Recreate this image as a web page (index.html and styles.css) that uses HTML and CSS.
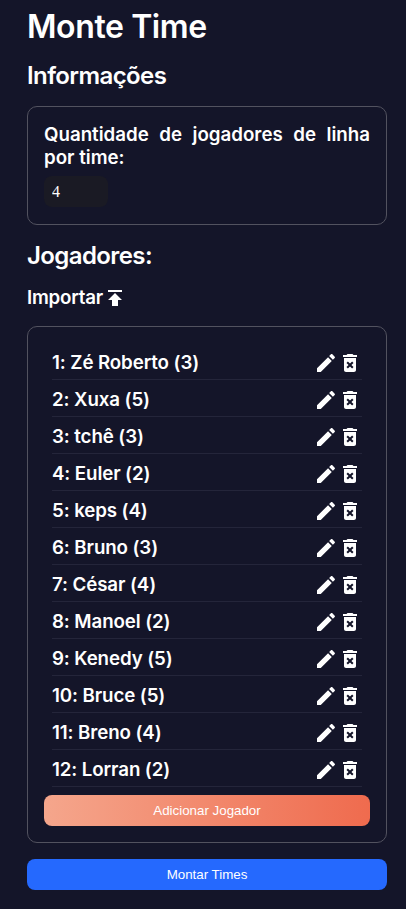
FILE: index.html
```html
<!DOCTYPE html>
<html lang="pt-BR">
<head>
<meta charset="utf-8">
<title>Monte Time</title>
<link rel="stylesheet" href="styles.css">
</head>
<body>
<main class="page">
  <h1 class="title">Monte Time</h1>
  <h2 class="heading">Informações</h2>
  <section class="card info">
    <label class="label" for="qty">Quantidade de jogadores de linha por time:</label>
    <input class="qty" id="qty" type="text" value="4">
  </section>
  <h2 class="heading players">Jogadores:</h2>
  <div class="import">Importar<svg class="import-icon" viewBox="0 0 24 24"><path d="M5 4v2h14V4H5zm0 10h4v6h6v-6h4l-7-7-7 7z"/></svg></div>
  <section class="card list-card">
    <ul class="list">
      <li class="row"><span>1: Zé Roberto (3)</span><span class="icons"><svg viewBox="0 0 24 24"><path d="M3 17.25V21h3.75L17.81 9.94l-3.75-3.75L3 17.25zM20.71 7.04c.39-.39.39-1.02 0-1.41l-2.34-2.34c-.39-.39-1.02-.39-1.41 0l-1.83 1.83 3.75 3.75 1.83-1.83z"/></svg><svg viewBox="0 0 24 24"><path d="M6 19c0 1.1.9 2 2 2h8c1.1 0 2-.9 2-2V7H6v12zm2.46-7.12 1.41-1.41L12 12.59l2.12-2.12 1.41 1.41L13.41 14l2.12 2.12-1.41 1.41L12 15.41l-2.12 2.12-1.41-1.41L10.59 14l-2.13-2.12zM15.5 4l-1-1h-5l-1 1H5v2h14V4z"/></svg></span></li>
      <li class="row"><span>2: Xuxa (5)</span><span class="icons"><svg viewBox="0 0 24 24"><path d="M3 17.25V21h3.75L17.81 9.94l-3.75-3.75L3 17.25zM20.71 7.04c.39-.39.39-1.02 0-1.41l-2.34-2.34c-.39-.39-1.02-.39-1.41 0l-1.83 1.83 3.75 3.75 1.83-1.83z"/></svg><svg viewBox="0 0 24 24"><path d="M6 19c0 1.1.9 2 2 2h8c1.1 0 2-.9 2-2V7H6v12zm2.46-7.12 1.41-1.41L12 12.59l2.12-2.12 1.41 1.41L13.41 14l2.12 2.12-1.41 1.41L12 15.41l-2.12 2.12-1.41-1.41L10.59 14l-2.13-2.12zM15.5 4l-1-1h-5l-1 1H5v2h14V4z"/></svg></span></li>
      <li class="row"><span>3: tchê (3)</span><span class="icons"><svg viewBox="0 0 24 24"><path d="M3 17.25V21h3.75L17.81 9.94l-3.75-3.75L3 17.25zM20.71 7.04c.39-.39.39-1.02 0-1.41l-2.34-2.34c-.39-.39-1.02-.39-1.41 0l-1.83 1.83 3.75 3.75 1.83-1.83z"/></svg><svg viewBox="0 0 24 24"><path d="M6 19c0 1.1.9 2 2 2h8c1.1 0 2-.9 2-2V7H6v12zm2.46-7.12 1.41-1.41L12 12.59l2.12-2.12 1.41 1.41L13.41 14l2.12 2.12-1.41 1.41L12 15.41l-2.12 2.12-1.41-1.41L10.59 14l-2.13-2.12zM15.5 4l-1-1h-5l-1 1H5v2h14V4z"/></svg></span></li>
      <li class="row"><span>4: Euler (2)</span><span class="icons"><svg viewBox="0 0 24 24"><path d="M3 17.25V21h3.75L17.81 9.94l-3.75-3.75L3 17.25zM20.71 7.04c.39-.39.39-1.02 0-1.41l-2.34-2.34c-.39-.39-1.02-.39-1.41 0l-1.83 1.83 3.75 3.75 1.83-1.83z"/></svg><svg viewBox="0 0 24 24"><path d="M6 19c0 1.1.9 2 2 2h8c1.1 0 2-.9 2-2V7H6v12zm2.46-7.12 1.41-1.41L12 12.59l2.12-2.12 1.41 1.41L13.41 14l2.12 2.12-1.41 1.41L12 15.41l-2.12 2.12-1.41-1.41L10.59 14l-2.13-2.12zM15.5 4l-1-1h-5l-1 1H5v2h14V4z"/></svg></span></li>
      <li class="row"><span>5: keps (4)</span><span class="icons"><svg viewBox="0 0 24 24"><path d="M3 17.25V21h3.75L17.81 9.94l-3.75-3.75L3 17.25zM20.71 7.04c.39-.39.39-1.02 0-1.41l-2.34-2.34c-.39-.39-1.02-.39-1.41 0l-1.83 1.83 3.75 3.75 1.83-1.83z"/></svg><svg viewBox="0 0 24 24"><path d="M6 19c0 1.1.9 2 2 2h8c1.1 0 2-.9 2-2V7H6v12zm2.46-7.12 1.41-1.41L12 12.59l2.12-2.12 1.41 1.41L13.41 14l2.12 2.12-1.41 1.41L12 15.41l-2.12 2.12-1.41-1.41L10.59 14l-2.13-2.12zM15.5 4l-1-1h-5l-1 1H5v2h14V4z"/></svg></span></li>
      <li class="row"><span>6: Bruno (3)</span><span class="icons"><svg viewBox="0 0 24 24"><path d="M3 17.25V21h3.75L17.81 9.94l-3.75-3.75L3 17.25zM20.71 7.04c.39-.39.39-1.02 0-1.41l-2.34-2.34c-.39-.39-1.02-.39-1.41 0l-1.83 1.83 3.75 3.75 1.83-1.83z"/></svg><svg viewBox="0 0 24 24"><path d="M6 19c0 1.1.9 2 2 2h8c1.1 0 2-.9 2-2V7H6v12zm2.46-7.12 1.41-1.41L12 12.59l2.12-2.12 1.41 1.41L13.41 14l2.12 2.12-1.41 1.41L12 15.41l-2.12 2.12-1.41-1.41L10.59 14l-2.13-2.12zM15.5 4l-1-1h-5l-1 1H5v2h14V4z"/></svg></span></li>
      <li class="row"><span>7: César (4)</span><span class="icons"><svg viewBox="0 0 24 24"><path d="M3 17.25V21h3.75L17.81 9.94l-3.75-3.75L3 17.25zM20.71 7.04c.39-.39.39-1.02 0-1.41l-2.34-2.34c-.39-.39-1.02-.39-1.41 0l-1.83 1.83 3.75 3.75 1.83-1.83z"/></svg><svg viewBox="0 0 24 24"><path d="M6 19c0 1.1.9 2 2 2h8c1.1 0 2-.9 2-2V7H6v12zm2.46-7.12 1.41-1.41L12 12.59l2.12-2.12 1.41 1.41L13.41 14l2.12 2.12-1.41 1.41L12 15.41l-2.12 2.12-1.41-1.41L10.59 14l-2.13-2.12zM15.5 4l-1-1h-5l-1 1H5v2h14V4z"/></svg></span></li>
      <li class="row"><span>8: Manoel (2)</span><span class="icons"><svg viewBox="0 0 24 24"><path d="M3 17.25V21h3.75L17.81 9.94l-3.75-3.75L3 17.25zM20.71 7.04c.39-.39.39-1.02 0-1.41l-2.34-2.34c-.39-.39-1.02-.39-1.41 0l-1.83 1.83 3.75 3.75 1.83-1.83z"/></svg><svg viewBox="0 0 24 24"><path d="M6 19c0 1.1.9 2 2 2h8c1.1 0 2-.9 2-2V7H6v12zm2.46-7.12 1.41-1.41L12 12.59l2.12-2.12 1.41 1.41L13.41 14l2.12 2.12-1.41 1.41L12 15.41l-2.12 2.12-1.41-1.41L10.59 14l-2.13-2.12zM15.5 4l-1-1h-5l-1 1H5v2h14V4z"/></svg></span></li>
      <li class="row"><span>9: Kenedy (5)</span><span class="icons"><svg viewBox="0 0 24 24"><path d="M3 17.25V21h3.75L17.81 9.94l-3.75-3.75L3 17.25zM20.71 7.04c.39-.39.39-1.02 0-1.41l-2.34-2.34c-.39-.39-1.02-.39-1.41 0l-1.83 1.83 3.75 3.75 1.83-1.83z"/></svg><svg viewBox="0 0 24 24"><path d="M6 19c0 1.1.9 2 2 2h8c1.1 0 2-.9 2-2V7H6v12zm2.46-7.12 1.41-1.41L12 12.59l2.12-2.12 1.41 1.41L13.41 14l2.12 2.12-1.41 1.41L12 15.41l-2.12 2.12-1.41-1.41L10.59 14l-2.13-2.12zM15.5 4l-1-1h-5l-1 1H5v2h14V4z"/></svg></span></li>
      <li class="row"><span>10: Bruce (5)</span><span class="icons"><svg viewBox="0 0 24 24"><path d="M3 17.25V21h3.75L17.81 9.94l-3.75-3.75L3 17.25zM20.71 7.04c.39-.39.39-1.02 0-1.41l-2.34-2.34c-.39-.39-1.02-.39-1.41 0l-1.83 1.83 3.75 3.75 1.83-1.83z"/></svg><svg viewBox="0 0 24 24"><path d="M6 19c0 1.1.9 2 2 2h8c1.1 0 2-.9 2-2V7H6v12zm2.46-7.12 1.41-1.41L12 12.59l2.12-2.12 1.41 1.41L13.41 14l2.12 2.12-1.41 1.41L12 15.41l-2.12 2.12-1.41-1.41L10.59 14l-2.13-2.12zM15.5 4l-1-1h-5l-1 1H5v2h14V4z"/></svg></span></li>
      <li class="row"><span>11: Breno (4)</span><span class="icons"><svg viewBox="0 0 24 24"><path d="M3 17.25V21h3.75L17.81 9.94l-3.75-3.75L3 17.25zM20.71 7.04c.39-.39.39-1.02 0-1.41l-2.34-2.34c-.39-.39-1.02-.39-1.41 0l-1.83 1.83 3.75 3.75 1.83-1.83z"/></svg><svg viewBox="0 0 24 24"><path d="M6 19c0 1.1.9 2 2 2h8c1.1 0 2-.9 2-2V7H6v12zm2.46-7.12 1.41-1.41L12 12.59l2.12-2.12 1.41 1.41L13.41 14l2.12 2.12-1.41 1.41L12 15.41l-2.12 2.12-1.41-1.41L10.59 14l-2.13-2.12zM15.5 4l-1-1h-5l-1 1H5v2h14V4z"/></svg></span></li>
      <li class="row"><span>12: Lorran (2)</span><span class="icons"><svg viewBox="0 0 24 24"><path d="M3 17.25V21h3.75L17.81 9.94l-3.75-3.75L3 17.25zM20.71 7.04c.39-.39.39-1.02 0-1.41l-2.34-2.34c-.39-.39-1.02-.39-1.41 0l-1.83 1.83 3.75 3.75 1.83-1.83z"/></svg><svg viewBox="0 0 24 24"><path d="M6 19c0 1.1.9 2 2 2h8c1.1 0 2-.9 2-2V7H6v12zm2.46-7.12 1.41-1.41L12 12.59l2.12-2.12 1.41 1.41L13.41 14l2.12 2.12-1.41 1.41L12 15.41l-2.12 2.12-1.41-1.41L10.59 14l-2.13-2.12zM15.5 4l-1-1h-5l-1 1H5v2h14V4z"/></svg></span></li>
    </ul>
    <button class="btn add" type="button">Adicionar Jogador</button>
  </section>
  <button class="btn build" type="button">Montar Times</button>
</main>
</body>
</html>
```
FILE: styles.css
```css
* { box-sizing: border-box; }
html, body { margin: 0; padding: 0; }
body {
  background: #141529;
  color: #fff;
  font-family: Inter, "Liberation Sans", sans-serif;
  height: 909px;
  overflow: hidden;
}
.page { width: 360px; margin-left: 27px; padding-top: 7px; }
.title { margin: 0; font-size: 32px; line-height: 40px; font-weight: 600; letter-spacing: -0.4px; }
.heading { margin: 0; font-size: 24px; line-height: 30px; font-weight: 600; letter-spacing: -0.6px; padding-top: 14px; }
.card {
  border: 1px solid #52525f;
  border-radius: 10px;
  padding: 16px;
}
.info { margin-top: 15px; height: 119px; }
.label {
  display: block;
  font-size: 18.72px;
  line-height: 23px;
  font-weight: 600;
  text-align: justify;
}
.qty {
  display: block;
  width: 64px;
  height: 31px;
  margin-top: 7px;
  padding: 0 8px;
  border: 0;
  border-radius: 8px;
  background: #1a1a24;
  color: #fff;
  font-family: "Liberation Serif", serif;
  font-size: 16px;
}
.players { padding-top: 16px; }
.import {
  display: flex;
  align-items: center;
  margin-top: 15px;
  font-size: 18.72px;
  line-height: 24px;
  font-weight: 600;
  letter-spacing: -0.2px;
}
.import-icon { width: 24px; height: 24px; fill: #fff; }
.list-card { margin-top: 16px; height: 517px; padding-top: 16px; }
.list { list-style: none; margin: 0; padding: 0 8px; }
.row {
  display: flex;
  justify-content: space-between;
  align-items: center;
  height: 37px;
  padding-top: 2px;
  border-bottom: 1px solid #24253a;
  font-size: 18.72px;
  font-weight: 600;
  letter-spacing: -0.1px;
}
.icons { display: flex; padding-top: 2px; }
.icons svg { width: 24px; height: 24px; fill: #fff; display: block; }
.btn {
  display: block;
  width: 100%;
  height: 31px;
  border: 0;
  border-radius: 8px;
  color: #fff;
  font-family: "Liberation Sans", sans-serif;
  font-size: 13.33px;
}
.add { margin-top: 8px; background: linear-gradient(90deg, #f5a68c, #ef6b4e); }
.build { margin-top: 16px; background: #2569fe; }
```
